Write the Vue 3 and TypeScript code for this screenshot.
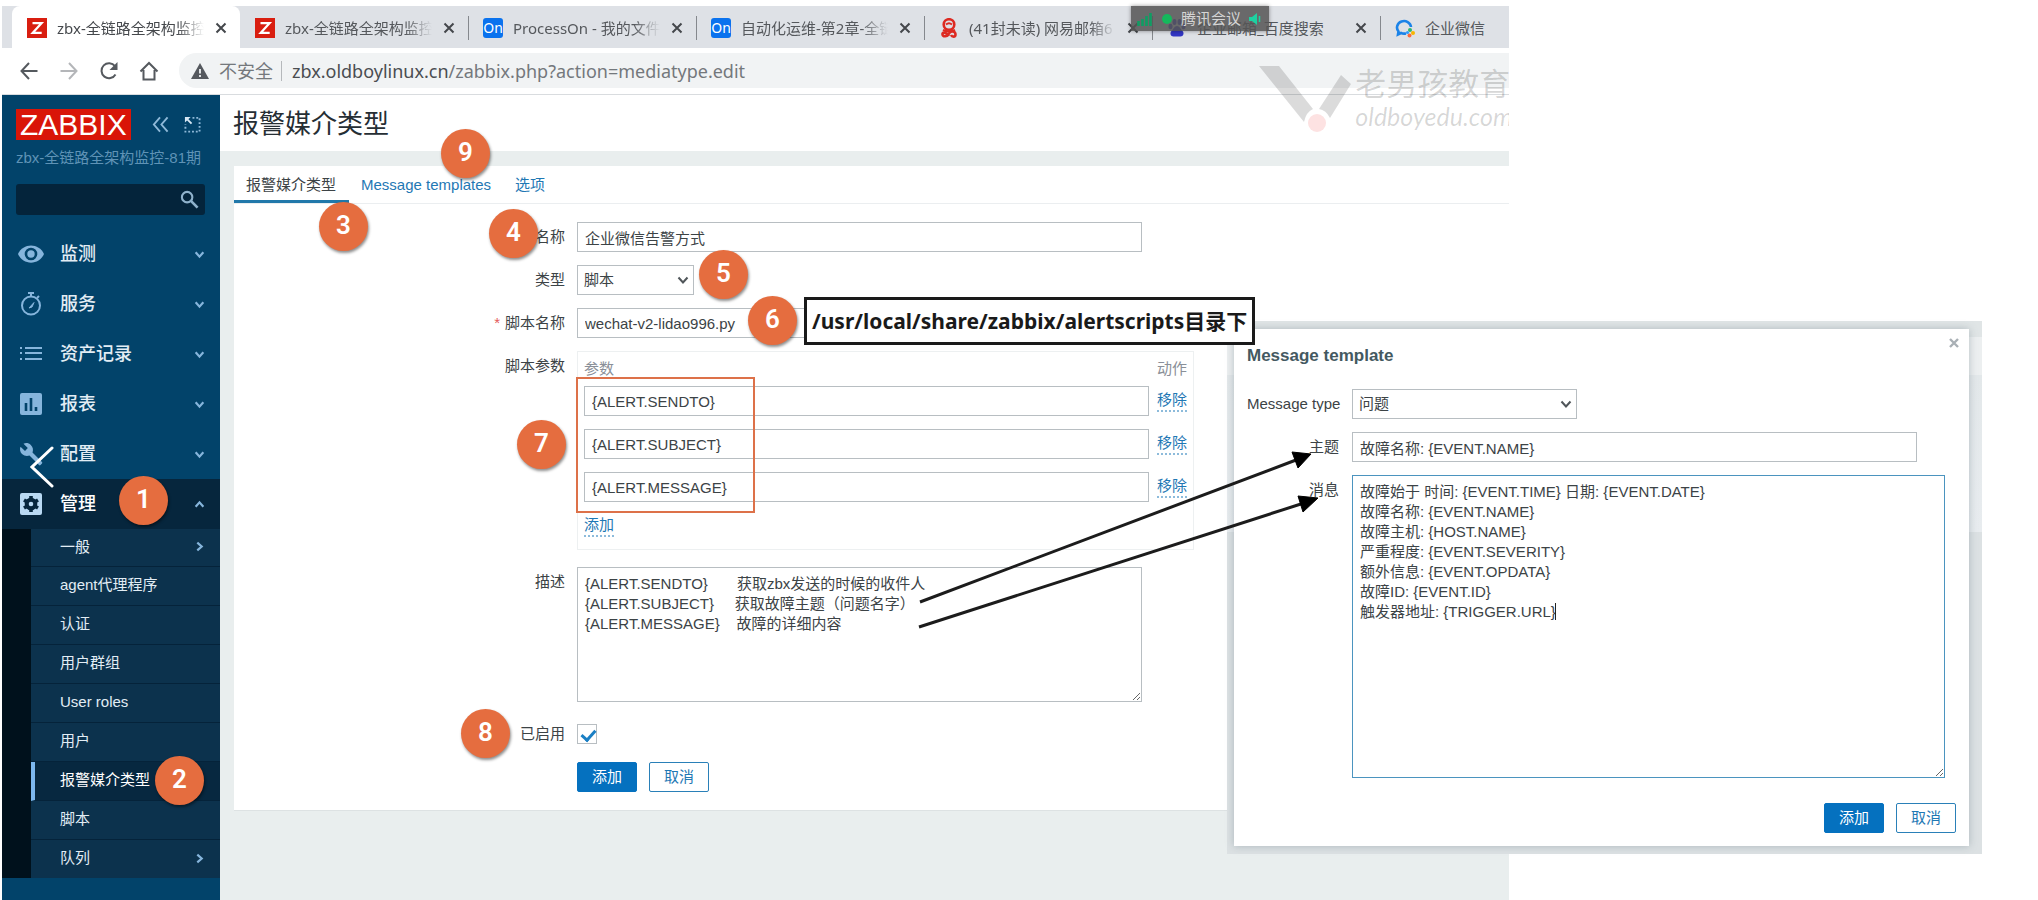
<script setup lang="ts">
import { ref } from 'vue'

type Fav = 'zabbix' | 'on' | 'mail' | 'paw' | 'wecom'
interface BrowserTab { title: string; fav: Fav; closable: boolean }
interface Marker { n: number; x: number; y: number }

const browserTabs: BrowserTab[] = [
  { title: 'zbx-全链路全架构监控', fav: 'zabbix', closable: true },
  { title: 'zbx-全链路全架构监控', fav: 'zabbix', closable: true },
  { title: 'ProcessOn - 我的文件', fav: 'on', closable: true },
  { title: '自动化运维-第2章-全链', fav: 'on', closable: true },
  { title: '(41封未读) 网易邮箱6', fav: 'mail', closable: true },
  { title: '企业邮箱_百度搜索', fav: 'paw', closable: true },
  { title: '企业微信', fav: 'wecom', closable: false },
]

const menu = [
  { label: '监测', icon: 'eye' },
  { label: '服务', icon: 'timer' },
  { label: '资产记录', icon: 'list' },
  { label: '报表', icon: 'chart' },
  { label: '配置', icon: 'wrench' },
]

const submenu = [
  { label: '一般', more: true },
  { label: 'agent代理程序' },
  { label: '认证' },
  { label: '用户群组' },
  { label: 'User roles' },
  { label: '用户' },
  { label: '报警媒介类型', active: true },
  { label: '脚本' },
  { label: '队列', more: true },
]

const name = ref('企业微信告警方式')
const scriptName = ref('wechat-v2-lidao996.py')
const params = ref(['{ALERT.SENDTO}', '{ALERT.SUBJECT}', '{ALERT.MESSAGE}'])
const description = ref(
  [
    '{ALERT.SENDTO}       获取zbx发送的时候的收件人',
    '{ALERT.SUBJECT}     获取故障主题（问题名字）',
    '{ALERT.MESSAGE}    故障的详细内容',
  ].join('\n'),
)
const enabled = ref(true)
const subject = ref('故障名称: {EVENT.NAME}')
const message = ref(
  [
    '故障始于 时间: {EVENT.TIME} 日期: {EVENT.DATE}',
    '故障名称: {EVENT.NAME}',
    '故障主机: {HOST.NAME}',
    '严重程度: {EVENT.SEVERITY}',
    '额外信息: {EVENT.OPDATA}',
    '故障ID: {EVENT.ID}',
    '触发器地址: {TRIGGER.URL}',
  ].join('\n'),
)

const markers: Marker[] = [
  { n: 1, x: 144, y: 501 },
  { n: 2, x: 180, y: 781 },
  { n: 3, x: 344, y: 227 },
  { n: 4, x: 514, y: 234 },
  { n: 5, x: 724, y: 275 },
  { n: 6, x: 773, y: 321 },
  { n: 7, x: 542, y: 445 },
  { n: 8, x: 486, y: 734 },
  { n: 9, x: 466, y: 154 },
]
</script>

<template>
  <div class="canvas">
    <div class="browser">
      <div class="tabstrip">
        <div v-for="(t, i) in browserTabs" :key="i" class="btab" :class="{ current: i === 0 }">
          <svg v-if="t.fav === 'zabbix'" class="fav" viewBox="0 0 20 20">
            <rect width="20" height="20" fill="#d91e10" />
            <path d="M5.500 5.200H14.500L5.800 14.800H14.700" fill="none" stroke="#fff" stroke-width="2.300" />
          </svg>
          <span v-else-if="t.fav === 'on'" class="fav fav-on">On</span>
          <svg v-else-if="t.fav === 'mail'" class="fav" viewBox="0 0 20 20" fill="none" stroke="#dd2a22" stroke-width="2.600">
            <circle cx="10" cy="6.500" r="5.300" />
            <path d="M7 6.500Q10 4 13 6.500M4 12Q10 15 16 12" stroke-width="2" />
            <path d="M10 18C7 13.500 3 14 3.500 16.500S8 19 10 15.500 16.500 13.500 16.500 16.500 13 19 12 17" />
          </svg>
          <svg v-else-if="t.fav === 'paw'" class="fav" viewBox="0 0 20 20" fill="#3236c4">
            <ellipse cx="3.500" cy="8.500" rx="2" ry="2.800" /><ellipse cx="7.500" cy="4" rx="2" ry="3" />
            <ellipse cx="12.500" cy="4" rx="2" ry="3" /><ellipse cx="16.500" cy="8.500" rx="2" ry="2.800" />
            <path d="M10 8C7.500 8 6.500 11 4.500 13S3.500 18.500 6.500 18.500H13.500C16.500 18.500 17.500 15 15.500 13S12.500 8 10 8Z" />
          </svg>
          <svg v-else class="fav" viewBox="0 0 20 20" fill="none">
            <path d="M11 15.500Q8 16 6 15L3 16.500 3.500 13.500A7 6.500 0 1 1 16 9" stroke="#1b83e8" stroke-width="2.600" />
            <circle cx="15" cy="12" r="2" fill="#2bb673" /><circle cx="18" cy="15" r="2" fill="#f7b500" />
            <circle cx="14.500" cy="17.500" r="2" fill="#fb6b3b" /><circle cx="12.500" cy="14.500" r="1.600" fill="#2f9bff" />
          </svg>
          <span class="btitle">{{ t.title }}</span>
          <button v-if="t.closable" class="bclose" type="button" aria-label="关闭标签页">
            <svg viewBox="0 0 12 12"><path d="M1.500 1.500L10.500 10.500M10.500 1.500L1.500 10.500" stroke="#44474b" stroke-width="2" /></svg>
          </button>
        </div>
      </div>

      <div class="toolbar">
        <button type="button" class="nav" aria-label="后退">
          <svg viewBox="0 0 20 20"><path d="M18.500 10H3M10 2L2.500 10 10 18" /></svg>
        </button>
        <button type="button" class="nav dim" aria-label="前进">
          <svg viewBox="0 0 20 20"><path d="M1.500 10H17M10 2L17.500 10 10 18" /></svg>
        </button>
        <button type="button" class="nav" aria-label="刷新">
          <svg viewBox="0 0 20 20"><path d="M16.500 13.500A7.500 7.500 0 1 1 16 5.200" /><path d="M18.500 1V9H10.500Z" fill="#55595e" stroke="none" /></svg>
        </button>
        <button type="button" class="nav" aria-label="主页">
          <svg viewBox="0 0 20 20"><path d="M1.500 10.500L10 2 18.500 10.500M4.500 9V18.500H15.500V9" /></svg>
        </button>
        <div class="omnibox">
          <svg class="warn" viewBox="0 0 18 16"><path d="M9 0L18 16H0Z" fill="#55595e" /><path d="M9 6V10.500M9 12V14" stroke="#f1f3f4" stroke-width="1.800" /></svg>
          <span class="unsafe">不安全</span>
          <span class="url"><b>zbx.oldboylinux.cn</b>/zabbix.php?action=mediatype.edit</span>
        </div>
      </div>

      <div class="app">
        <aside class="sidebar">
          <div class="brand">
            <a class="logo" href="#">ZABBIX</a>
            <button type="button" class="tool" aria-label="折叠">
              <svg viewBox="0 0 18 18"><path d="M8.500 1.500L2 9 8.500 16.500M16.500 1.500L10 9 16.500 16.500" fill="none" stroke="#8fb9d8" stroke-width="2" /></svg>
            </button>
            <button type="button" class="tool" aria-label="隐藏">
              <svg viewBox="0 0 18 18" fill="none" stroke="#8fb9d8"><path d="M9 2H16.500V16.500H1.500V9" stroke-width="2" stroke-dasharray="2 2" /><path d="M8 8L3 3" stroke="#d7e8f5" stroke-width="2" /><path d="M1 7V1H7Z" fill="#d7e8f5" stroke="none" /></svg>
            </button>
          </div>
          <div class="server">zbx-全链路全架构监控-81期</div>
          <div class="search">
            <input type="text" aria-label="搜索" />
            <svg viewBox="0 0 20 20"><circle cx="7.500" cy="7.500" r="5.500" fill="none" stroke="#8fb2cc" stroke-width="2.200" /><path d="M11.500 11.500L18.500 18.500" stroke="#8fb2cc" stroke-width="2.800" /></svg>
          </div>
          <nav>
            <a v-for="m in menu" :key="m.label" class="item" href="#">
              <svg class="ico" viewBox="0 0 26 26">
                <g v-if="m.icon === 'eye'">
                  <path d="M0 13C5 1.500 21 1.500 26 13 21 24.500 5 24.500 0 13Z" fill="#86b5dc" />
                  <circle cx="13" cy="13" r="5" fill="#86b5dc" stroke="#02436a" stroke-width="2.600" />
                </g>
                <g v-else-if="m.icon === 'timer'" fill="none" stroke="#86b5dc" stroke-width="2">
                  <circle cx="13" cy="14.500" r="9" /><path d="M10 2H16M13 2V5M19 7L21 5" /><path d="M11 17L16 11.500 14 16Z" fill="#86b5dc" stroke-width="1" />
                </g>
                <g v-else-if="m.icon === 'list'" stroke="#86b5dc" stroke-width="2">
                  <path d="M7 7H24M7 12H24M7 18H24M2 7H4M2 12H4M2 18H4" />
                </g>
                <g v-else-if="m.icon === 'chart'">
                  <rect x="2" y="2" width="22" height="22" rx="2" fill="#86b5dc" /><path d="M8 12V20M13 7V20M18 16V20" stroke="#02436a" stroke-width="2.600" />
                </g>
                <path v-else d="M24 21L14.500 11.500C15.500 9 15 6 12.800 4 10.800 2 8 1.600 5.500 2.700L9.800 7 7 10 2.500 5.700C1.500 8 2 11 4 13 6.200 15 9 15.500 11.500 14.500L21 24C21.500 24.500 22 24.500 22.500 24L24 22.500Q24.600 21.700 24 21Z" fill="#86b5dc" />
              </svg>
              <span class="grow">{{ m.label }}</span>
              <svg class="chev" viewBox="0 0 10 10"><path d="M1.500 3L5 7 8.500 3" /></svg>
            </a>
            <a class="item open" href="#">
              <svg class="ico" viewBox="0 0 26 26">
                <rect x="2" y="2" width="22" height="22" rx="2" fill="#b9d9f3" />
                <circle cx="13" cy="13" r="4.300" fill="none" stroke="#06263d" stroke-width="4" />
                <path d="M13 5V8M13 18V21M6 9L8.500 10.500M17.500 15.500L20 17M6 17L8.500 15.500M17.500 10.500L20 9" stroke="#06263d" stroke-width="3.600" />
              </svg>
              <span class="grow">管理</span>
              <svg class="chev" viewBox="0 0 10 10"><path d="M1.500 7L5 3 8.500 7" /></svg>
            </a>
            <div class="sub">
              <a v-for="s in submenu" :key="s.label" class="subitem" :class="{ active: s.active }" href="#">
                <span class="grow">{{ s.label }}</span>
                <svg v-if="s.more" class="chev" viewBox="0 0 10 10"><path d="M3 1.500L7 5 3 8.500" /></svg>
              </a>
            </div>
          </nav>
        </aside>

        <main class="main">
          <h1>报警媒介类型</h1>
          <section class="card">
            <div class="ptabs">
              <a class="ptab selected" href="#">报警媒介类型</a>
              <a class="ptab" href="#">Message templates</a>
              <a class="ptab" href="#">选项</a>
            </div>
            <form class="form" @submit.prevent>
              <label for="f-name">名称</label>
              <input id="f-name" v-model="name" class="box field" type="text" />

              <label for="f-type">类型</label>
              <div class="pick short">
                <select id="f-type" class="box"><option>脚本</option></select>
                <svg viewBox="0 0 12 12"><path d="M1.500 3.500L6 8.500 10.500 3.500" /></svg>
              </div>

              <label for="f-script"><i>*</i>脚本名称</label>
              <input id="f-script" v-model="scriptName" class="box field" type="text" />

              <span class="lab">脚本参数</span>
              <div class="params">
                <table>
                  <thead><tr><th>参数</th><th>动作</th></tr></thead>
                  <tbody>
                    <tr v-for="(p, i) in params" :key="i">
                      <td><input v-model="params[i]" class="box field" type="text" :aria-label="'参数 ' + (i + 1)" /></td>
                      <td><button type="button" class="dotted">移除</button></td>
                    </tr>
                  </tbody>
                </table>
                <button type="button" class="dotted">添加</button>
              </div>

              <label for="f-desc" class="spaced">描述</label>
              <textarea id="f-desc" v-model="description" class="box field desc spaced"></textarea>

              <label for="f-on">已启用</label>
              <div class="tick"><input id="f-on" v-model="enabled" type="checkbox" /></div>

              <span></span>
              <div class="buttons">
                <button type="button" class="btn solid">添加</button>
                <button type="button" class="btn">取消</button>
              </div>
            </form>
          </section>
        </main>
      </div>

      <div class="watermark">
        <svg viewBox="0 0 96 70">
          <path d="M0 0H20L54 43Q47 46 45 56Z M82 9L92 18 71 52Q67 44 60 43Z" fill="#000" fill-opacity=".14" />
          <circle cx="58" cy="57" r="9" fill="#fde2e2" />
        </svg>
        <div class="wm-text"><span>老男孩教育</span><em>oldboyedu.com</em></div>
      </div>
    </div>

    <div class="meeting">
      <svg viewBox="0 0 16 14"><path d="M1.500 14V9M5.500 14V7M9.500 14V4M13.500 14V1" stroke="#0f9d63" stroke-width="2.600" /></svg>
      <svg viewBox="0 0 16 14"><circle cx="8" cy="7" r="5" fill="#15b85c" /></svg>
      <span>腾讯会议</span>
      <svg viewBox="0 0 16 14"><path d="M2 5H5L10 1V13L5 9H2Z" fill="#1dd1a1" /><path d="M12.500 4V10" stroke="#1dd1a1" stroke-width="1.500" /></svg>
    </div>

    <div class="backdrop">
      <div class="dialog" role="dialog" aria-labelledby="dlg-title">
        <button type="button" class="dclose" aria-label="关闭">
          <svg viewBox="0 0 12 12"><path d="M2 2L10 10M10 2L2 10" stroke="#a9b0b5" stroke-width="2.400" /></svg>
        </button>
        <h2 id="dlg-title">Message template</h2>
        <div class="dform">
          <label for="d-type">Message type</label>
          <div class="pick long">
            <select id="d-type" class="box"><option>问题</option></select>
            <svg viewBox="0 0 12 12"><path d="M1.500 3.500L6 8.500 10.500 3.500" /></svg>
          </div>
          <label for="d-subject">主题</label>
          <input id="d-subject" v-model="subject" class="box field" type="text" />
          <label for="d-msg">消息</label>
          <div class="editor">
            <textarea id="d-msg" v-model="message" class="box msg"></textarea>
            <span class="caret"></span>
          </div>
        </div>
        <div class="buttons end">
          <button type="button" class="btn solid">添加</button>
          <button type="button" class="btn">取消</button>
        </div>
      </div>
    </div>

    <div class="frame"></div>
    <div class="note">/usr/local/share/zabbix/alertscripts目录下</div>
    <svg class="arrows" viewBox="0 0 420 190">
      <g stroke="#1c1c1c" stroke-width="3"><path d="M10 162L386 20M9 187L394 63" /></g>
      <path d="M401 14L382 12 388 28Z M408 58L388 56 393 72Z" fill="#000" stroke="#000" />
    </svg>
    <span v-for="m in markers" :key="m.n" class="marker" :style="{ left: m.x + 'px', top: m.y + 'px' }">{{ m.n }}</span>
    <button type="button" class="prev" aria-label="上一张">
      <svg viewBox="0 0 24 42"><path d="M22 2L2 21 22 40" fill="none" stroke="#fff" stroke-width="3" stroke-linecap="round" /></svg>
    </button>
  </div>
</template>

<style>
html, body { background: #fff; }
</style>

<style scoped>
* { box-sizing: border-box; }
.canvas {
  position: relative;
  min-height: 100vh;
  padding: 6px 0 0 2px;
  display: flex;
  overflow: hidden;
  font: 15px/20px "Liberation Sans", "Noto Sans CJK SC", sans-serif;
  color: #3c4346;
}
button, input, select, textarea { font: inherit; color: inherit; margin: 0; }
button { border: 0; padding: 0; background: none; cursor: pointer; }
a { text-decoration: none; color: inherit; }
svg { display: block; }
.grow { flex: 1; }

/* browser window */
.browser { position: relative; width: 74%; display: flex; flex-direction: column; overflow: hidden; }
.tabstrip { display: flex; height: 42px; padding-left: 10px; background: #dee1e6; overflow: hidden; }
.btab {
  position: relative;
  flex: none;
  width: 228px;
  display: flex;
  align-items: center;
  gap: 10px;
  padding: 1px 12px 0 15px;
  font-family: "Noto Sans", "Noto Sans CJK SC", sans-serif;
  color: #55585c;
}
.btab.current { background: #fff; border-radius: 8px 8px 0 0; color: #45484c; }
.btab:nth-child(n + 3)::before {
  content: "";
  position: absolute;
  left: 0;
  top: 10px;
  height: 24px;
  border-left: 1px solid #85888d;
}
.fav { flex: none; width: 20px; height: 20px; }
.fav-on { background: #0a72ee; border-radius: 3px; color: #fff; text-align: center; font-size: 14px; line-height: 20px; }
.btitle {
  flex: 1;
  overflow: hidden;
  white-space: nowrap;
  mask-image: linear-gradient(to right, #000 82%, transparent);
}
.btab:nth-child(n + 6) .btitle { mask-image: none; }
.bclose { width: 14px; padding: 1px; }
.toolbar { display: flex; align-items: center; gap: 20px; height: 47px; padding-left: 17px; border-bottom: 1px solid #d9dcdf; background: #fff; }
.nav svg { width: 20px; fill: none; stroke: #55595e; stroke-width: 2; }
.nav.dim svg { stroke: #b4b6b9; }
.omnibox {
  flex: 1;
  display: flex;
  align-items: center;
  height: 35px;
  margin-bottom: 1px;
  padding-left: 12px;
  background: #f1f3f4;
  border-radius: 18px 0 0 18px;
  font: 18px/24px "Noto Sans", "Noto Sans CJK SC", sans-serif;
  color: #74787c;
}
.warn { width: 18px; margin-right: 10px; }
.unsafe { padding-right: 8px; margin-right: 10px; border-right: 1px solid #b5b8bb; line-height: 20px; }
.url b { font-weight: 400; color: #4a4d51; }

.app { flex: 1; display: flex; }
.sidebar { width: 218px; flex: none; background: #02436a; color: #e2edf5; }
.brand { display: flex; align-items: center; padding: 14px 20px 0 14px; gap: 15px; }
.logo { margin-right: 6px; padding: 0 4px; background: #d91508; color: #fff; font-size: 30px; line-height: 31px; }
.tool svg { width: 17px; }
.server { padding: 8px 14px 16px; color: #5f93b6; white-space: nowrap; }
.search { display: flex; align-items: center; height: 31px; margin: 0 15px 14px 14px; padding-right: 6px; background: #04243b; border-radius: 3px; }
.search input { flex: 1; min-width: 0; border: 0; background: none; outline: 0; padding: 0 8px; }
.search svg { width: 19px; }
.item { display: flex; align-items: center; height: 50px; padding: 0 15px 0 16px; gap: 16px; font-size: 18px; font-weight: 500; }
.item.open { background: #06263d; color: #fff; }
.ico { width: 26px; height: 26px; }
.chev { width: 11px; height: 11px; fill: none; stroke: #86b5dc; stroke-width: 2; }
.sub { padding-left: 29px; background: #00111c; }
.subitem { display: flex; align-items: center; height: 39px; padding: 0 15px 2px 29px; background: #0c324d; border-bottom: 1px solid #05233a; }
.subitem:last-child { height: 38px; border-bottom: 0; }
.subitem:first-child { height: 38px; }
.subitem.active { background: #072840; border-left: 4px solid #7cb8ef; padding-left: 25px; color: #fff; }

.main { flex: 1; min-width: 0; background: #e9eeee; }
h1 { margin: 0 0 15px; padding: 11px 13px 9px; background: #fff; font-size: 26px; line-height: 36px; font-weight: 400; color: #262e34; }
.card { margin-left: 14px; background: #fff; border-bottom: 1px solid #dde2e3; }
.ptabs { display: flex; height: 38px; border-bottom: 1px solid #ebeef0; }
.ptab { padding: 0 12px; line-height: 37px; color: #1f78b4; }
.ptab.selected { width: 115px; color: #3c4346; border-bottom: 3px solid #2178aa; }
.form { display: grid; grid-template-columns: 331px 1fr; column-gap: 12px; row-gap: 13px; padding: 18px 0 18px; }
.form > label, .lab, .dform > label { text-align: right; line-height: 30px; }
.form i { margin-right: 5px; color: #e45959; font-style: normal; }
.box { display: block; height: 30px; padding: 0 7px; border: 1px solid #b8bec2; border-radius: 0; background: #fff; outline: 0; }
.field { width: 565px; max-width: 100%; }
.pick { position: relative; }
.pick select { width: 100%; appearance: none; }
.pick svg { position: absolute; right: 5px; top: 9px; width: 12px; fill: none; stroke: #50565a; stroke-width: 2; pointer-events: none; }
.pick .box { padding: 0 6px; }
.short { width: 117px; }
.long { width: 225px; }
.params { width: 617px; padding: 0 0 12px 6px; border: 1px solid #edf0f1; }
table { width: 100%; border-collapse: collapse; white-space: nowrap; }
th { height: 34px; padding: 0 8px 0 0; text-align: left; font-weight: 400; color: #8a8f98; }
td { height: 43px; padding: 0 8px 13px 0; }
th + th, td + td { width: 37px; padding-right: 0; }
.dotted { display: block; color: #1f78b4; line-height: 20px; border-bottom: 2px dotted #8dbbdb; }
.desc { height: 135px; padding: 6px 7px; }
.spaced { margin: 4px 0; }
.tick { display: flex; align-items: center; height: 30px; }
.tick input { position: relative; width: 20px; height: 20px; appearance: none; border: 1px solid #b8bec2; background: #fff; }
.tick input:checked::before {
  content: "";
  position: absolute;
  left: 6px;
  top: 2px;
  width: 6px;
  height: 11px;
  border: solid #1a7fc4;
  border-width: 0 3px 3px 0;
  transform: rotate(42deg);
}
.buttons { display: flex; gap: 12px; }
.btn { width: 60px; height: 30px; border: 1px solid #2a80b8; border-radius: 2px; color: #1f78b4; background: #fff; }
.btn.solid { background: #0571bf; border-color: #0571bf; color: #fff; }

/* overlays */
.watermark { position: absolute; right: -4px; top: 60px; display: flex; }
.watermark svg { width: 96px; }
.wm-text { display: flex; flex-direction: column; color: rgba(0, 0, 0, .16); font-size: 31px; line-height: 38px; }
.wm-text em { font: italic 25px/24px Lato, sans-serif; }
.meeting {
  position: absolute;
  left: 1131px;
  top: 6px;
  display: flex;
  align-items: center;
  gap: 6px;
  height: 25px;
  padding: 0 6px;
  background: rgba(85, 85, 85, .86);
  box-shadow: 0 0 4px rgba(0, 0, 0, .4);
  color: #d5d5d5;
}
.meeting svg { width: 16px; }
.backdrop {
  position: absolute;
  left: 1227px;
  top: 321px;
  width: 755px;
  padding: 8px 13px 8px 7px;
  background: linear-gradient(#e0e5e6 16px, #eceff0 16px, #eceff0 54px, #e3e8ea 54px, #e8ecef 211px, #dce1e3 211px);
}
.dialog { position: relative; padding: 15px 13px 13px; background: #fff; box-shadow: 0 0 8px rgba(100, 120, 130, .4); }
.dclose { position: absolute; right: 9px; top: 8px; width: 12px; }
h2 { margin: 0 0 21px; font-size: 17px; line-height: 24px; color: #445961; }
.dform { display: grid; grid-template-columns: 92px 1fr; column-gap: 13px; row-gap: 13px; margin-bottom: 25px; white-space: nowrap; }
.editor { position: relative; width: 593px; }
.msg { width: 100%; height: 303px; padding: 6px 7px; border-color: #4b94bf; }
.caret { position: absolute; left: 203px; top: 128px; height: 17px; border-left: 1px solid #222; }
.end { justify-content: flex-end; }
.frame { position: absolute; left: 576px; top: 377px; width: 179px; height: 136px; border: 2px solid #dd7149; }
.note {
  position: absolute;
  left: 804px;
  top: 297px;
  padding: 0 5px;
  border: 3px solid #1a1a1a;
  background: #fff;
  color: #1a1a1a;
  font: 700 21px/42px "Noto Sans", "Noto Sans CJK SC", sans-serif;
  white-space: nowrap;
}
.arrows { position: absolute; left: 910px; top: 440px; width: 420px; height: 190px; pointer-events: none; }
.marker {
  position: absolute;
  width: 49px;
  height: 49px;
  margin: -25px 0 0 -25px;
  border-radius: 50%;
  background: #e56d3f;
  box-shadow: 1px 2px 3px rgba(0, 0, 0, .45);
  color: #fff;
  font: 600 26px/46px Roboto, sans-serif;
  text-align: center;
}
.prev { position: absolute; left: 30px; top: 446px; width: 24px; }
</style>
